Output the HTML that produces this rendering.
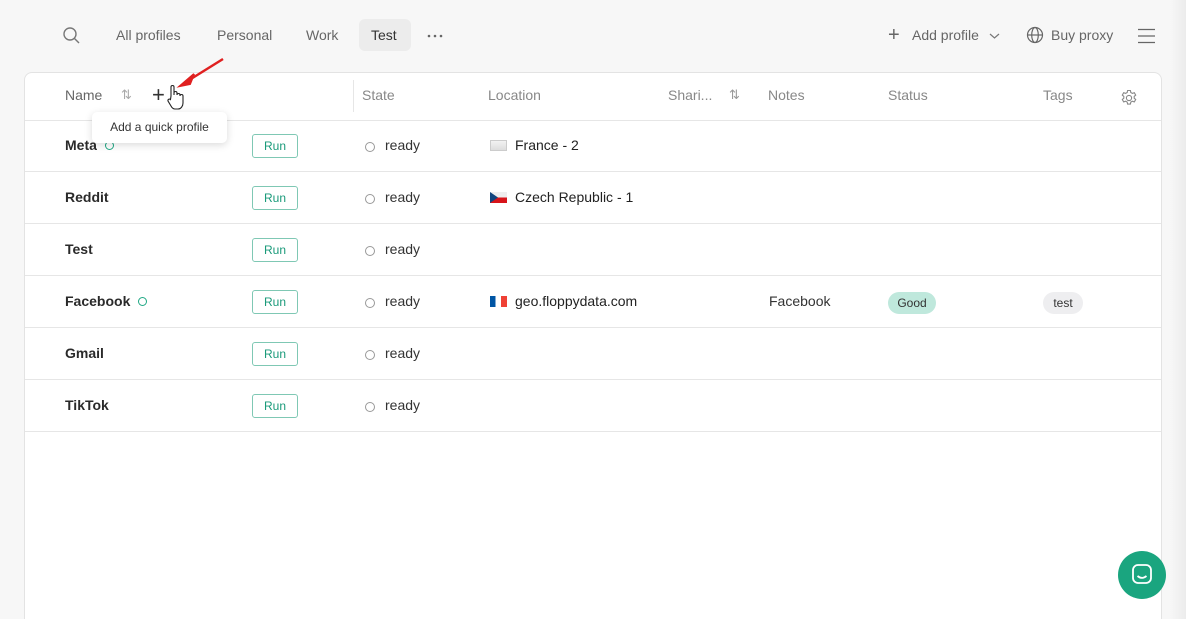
<!DOCTYPE html>
<html style="height:619px;overflow:hidden"><head><style>
*{margin:0;padding:0;box-sizing:border-box}
body{width:1186px;height:619px;background:#f7f7f7;font-family:"Liberation Sans",sans-serif;position:relative;overflow:hidden;color:#222}
.a{position:absolute;white-space:nowrap}
.tab{font-size:14px;color:#666;top:27px}
.card{position:absolute;left:24px;top:72px;width:1138px;height:560px;background:#fff;border:1px solid #e3e3e3;border-radius:8px}
.h{font-size:14px;color:#888;top:87px}
.row{position:absolute;left:25px;width:1136px;height:52px;border-bottom:1px solid #e6e6e6}
.nm{position:absolute;left:40px;top:17px;font-size:14px;font-weight:bold;color:#2a2a2a}
.run{position:absolute;left:227px;top:14px;width:46px;height:24px;border:1px solid #7fc8b4;border-radius:3px;color:#1a9a7a;font-size:12px;text-align:center;line-height:22px}
.st{position:absolute;left:340px;top:17px;font-size:14px;color:#333}
.st:before{content:"";position:absolute;left:0;top:5px;width:8px;height:8px;border:1px solid #999;border-radius:50%}
.st span{margin-left:20px}
.loc{position:absolute;left:465px;top:17px;font-size:14px;color:#222}
.fl{display:inline-block;width:17px;height:11px;vertical-align:-1px;margin-right:8px}
.dot{display:inline-block;width:9px;height:9px;border:1.5px solid #1fa884;border-radius:50%;margin-left:8px}
</style></head><body>
<div class="a" style="right:0;top:0;width:16px;height:619px;background:linear-gradient(90deg,#f7f7f7,#ececec)"></div>
<svg class="a" style="left:62px;top:26px" width="20" height="20" viewBox="0 0 20 20"><circle cx="8" cy="8" r="6" fill="none" stroke="#777" stroke-width="1.4"/><path d="M12.5 12.5 L17 17" stroke="#777" stroke-width="1.4"/></svg>
<div class="a tab" style="left:116px">All profiles</div>
<div class="a tab" style="left:217px">Personal</div>
<div class="a tab" style="left:306px">Work</div>
<div class="a" style="left:359px;top:19px;width:52px;height:32px;background:#ececec;border-radius:6px"></div>
<div class="a tab" style="left:371px;color:#333">Test</div>
<svg class="a" style="left:427px;top:34px" width="16" height="4"><circle cx="2" cy="2" r="1.3" fill="#666"/><circle cx="8" cy="2" r="1.3" fill="#666"/><circle cx="14" cy="2" r="1.3" fill="#666"/></svg>
<div class="a tab" style="left:888px;top:24px;font-size:20px;color:#666">+</div>
<div class="a tab" style="left:912px">Add profile</div>
<svg class="a" style="left:989px;top:32px" width="11" height="8"><path d="M1 2 L5.5 6 L10 2" fill="none" stroke="#777" stroke-width="1.2"/></svg>
<svg class="a" style="left:1026px;top:26px" width="18" height="18" viewBox="0 0 18 18" fill="none" stroke="#666" stroke-width="1.2"><circle cx="9" cy="9" r="7.5"/><ellipse cx="9" cy="9" rx="3.3" ry="7.5"/><path d="M1.5 9h15"/></svg>
<div class="a tab" style="left:1051px">Buy proxy</div>
<svg class="a" style="left:1138px;top:28px" width="18" height="16"><path d="M0 1.5h17M0 8h17M0 14.5h17" stroke="#666" stroke-width="1.2"/></svg>
<div class="card"></div>
<div class="a" style="left:25px;top:120px;width:1136px;border-top:1px solid #e6e6e6"></div>
<div class="a" style="left:353px;top:80px;width:1px;height:32px;background:#e6e6e6"></div>
<div class="a h" style="left:65px;color:#666">Name</div>
<div class="a h" style="left:121px;font-size:13px;color:#aaa">⇅</div>
<div class="a" style="left:152px;top:82px;font-size:22px;color:#333">+</div>
<div class="a h" style="left:362px">State</div>
<div class="a h" style="left:488px">Location</div>
<div class="a h" style="left:668px">Shari...</div>
<div class="a h" style="left:729px;font-size:13px;color:#999">⇅</div>
<div class="a h" style="left:768px">Notes</div>
<div class="a h" style="left:888px">Status</div>
<div class="a h" style="left:1043px">Tags</div>
<svg class="a" style="left:1120px;top:89px" width="18" height="18" viewBox="0 0 18 18" fill="none" stroke="#888" stroke-width="1.1"><circle cx="9" cy="9" r="2.6"/><path d="M7.6 1.5h2.8l.4 2 1.6.9 1.9-.7 1.4 2.4-1.5 1.3v1.8l1.5 1.3-1.4 2.4-1.9-.7-1.6.9-.4 2H7.6l-.4-2-1.6-.9-1.9.7-1.4-2.4 1.5-1.3V7.4L2.3 6.1l1.4-2.4 1.9.7 1.6-.9z"/></svg>

<div class="row" style="top:120px"><div class="nm">Meta<span class="dot"></span></div><div class="run">Run</div><div class="st"><span>ready</span></div><div class="loc"><span class="fl" style="background:linear-gradient(#f2f2f2,#ddd);border:1px solid #ccc"></span>France - 2</div></div>
<div class="row" style="top:172px"><div class="nm">Reddit</div><div class="run">Run</div><div class="st"><span>ready</span></div><div class="loc"><svg class="fl" viewBox="0 0 17 11"><rect width="17" height="5.5" fill="#eee"/><rect y="5.5" width="17" height="5.5" fill="#d7141a"/><path d="M0 0L8 5.5 0 11z" fill="#11457e"/></svg>Czech Republic - 1</div></div>
<div class="row" style="top:224px"><div class="nm">Test</div><div class="run">Run</div><div class="st"><span>ready</span></div></div>
<div class="row" style="top:276px"><div class="nm">Facebook<span class="dot"></span></div><div class="run">Run</div><div class="st"><span>ready</span></div><div class="loc"><span class="fl" style="background:linear-gradient(90deg,#0055a4 33%,#fff 33% 66%,#ef4135 66%)"></span>geo.floppydata.com</div>
<div class="a" style="left:744px;top:17px;font-size:14px;color:#333">Facebook</div>
<div class="a" style="left:863px;top:16px;width:48px;height:22px;background:#bfe8dc;border-radius:11px;font-size:12px;text-align:center;line-height:22px;color:#333">Good</div>
<div class="a" style="left:1018px;top:16px;width:40px;height:22px;background:#eeeef0;border-radius:11px;font-size:12px;text-align:center;line-height:22px;color:#333">test</div></div>
<div class="row" style="top:328px"><div class="nm">Gmail</div><div class="run">Run</div><div class="st"><span>ready</span></div></div>
<div class="row" style="top:380px"><div class="nm">TikTok</div><div class="run">Run</div><div class="st"><span>ready</span></div></div>

<div class="a" style="left:92px;top:112px;width:135px;height:31px;background:#fff;border-radius:5px;box-shadow:0 2px 8px rgba(0,0,0,.15);font-size:12px;color:#333;text-align:center;line-height:31px">Add a quick profile</div>
<svg class="a" style="left:164px;top:56px" width="64" height="64"><path d="M59 3 L22 26" stroke="#e02020" stroke-width="2.5"/><path d="M16 30 L30 18 L26 28 Z" fill="#e02020" stroke="#e02020" stroke-width="2"/><path d="M7 40v-9a1.5 1.5 0 0 1 3 0v8v-2a1.5 1.5 0 0 1 3 0v2a1.5 1.5 0 0 1 3 0v1a1.5 1.5 0 0 1 3 0v7c0 3-2 6-5 6h-3c-2 0-3-1-4-3l-3-5a1.5 1.5 0 0 1 2.5-1.5z" fill="#fff" stroke="#222" stroke-width="1.1"/></svg>
<div class="a" style="left:1118px;top:551px;width:48px;height:48px;border-radius:50%;background:#1aa57f"></div>
<svg class="a" style="left:1131px;top:563px" width="22" height="22" viewBox="0 0 22 22" fill="none" stroke="#fff" stroke-width="1.8"><rect x="2" y="2" width="18" height="18" rx="5"/><path d="M6.5 13c3 2.5 6 2.5 9 0"/></svg>
</body></html>
